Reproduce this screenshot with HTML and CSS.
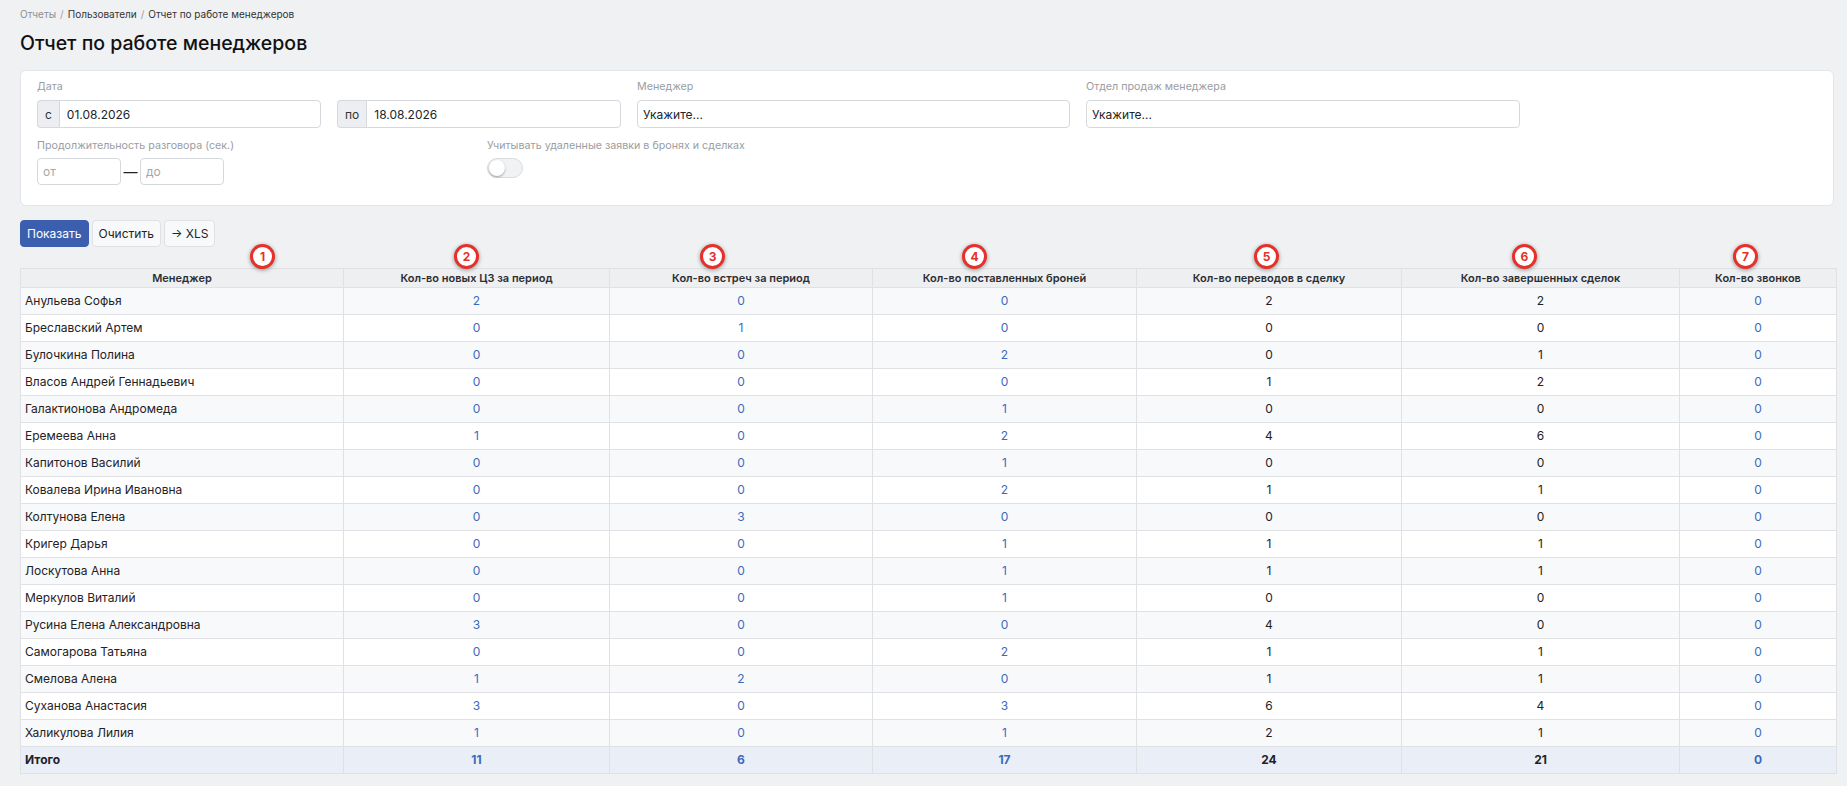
FILE: index.html
```html
<!DOCTYPE html>
<html lang="ru">
<head>
<meta charset="UTF-8">
<title>Отчет по работе менеджеров</title>
<link rel="stylesheet" href="styles.css">
</head>
<body>
<div class="page">
  <div class="breadcrumb">
    <a href="#">Отчеты</a><span class="sep">/</span><a href="#" class="dark">Пользователи</a><span class="sep">/</span><span class="dark">Отчет по работе менеджеров</span>
  </div>
  <h1>Отчет по работе менеджеров</h1>

  <div class="card filters">
    <div class="row row-top">
      <div class="field">
        <label>Дата</label>
        <div class="input-group">
          <span class="addon">с</span>
          <input type="text" value="01.08.2026">
        </div>
      </div>
      <div class="field">
        <label>&nbsp;</label>
        <div class="input-group">
          <span class="addon">по</span>
          <input type="text" value="18.08.2026">
        </div>
      </div>
      <div class="field">
        <label>Менеджер</label>
        <input type="text" class="control" value="Укажите...">
      </div>
      <div class="field">
        <label>Отдел продаж менеджера</label>
        <input type="text" class="control" value="Укажите...">
      </div>
    </div>
    <div class="row row-bottom">
      <div class="field">
        <label>Продолжительность разговора (сек.)</label>
        <div class="range">
          <input type="text" class="control small" placeholder="от">
          <span class="dash">—</span>
          <input type="text" class="control small" placeholder="до">
        </div>
      </div>
      <div class="field">
        <label>Учитывать удаленные заявки в бронях и сделках</label>
        <div class="switch"><span class="knob"></span></div>
      </div>
    </div>
  </div>

  <div class="actions">
    <button class="btn btn-primary">Показать</button>
    <button class="btn">Очистить</button>
    <button class="btn">→ XLS</button>
  </div>

  <div class="report">
    <span class="badge b1">1</span>
    <span class="badge b2">2</span>
    <span class="badge b3">3</span>
    <span class="badge b4">4</span>
    <span class="badge b5">5</span>
    <span class="badge b6">6</span>
    <span class="badge b7">7</span>
    <table class="report-table">
      <thead>
        <tr>
          <th>Менеджер</th>
          <th>Кол-во новых ЦЗ за период</th>
          <th>Кол-во встреч за период</th>
          <th>Кол-во поставленных броней</th>
          <th>Кол-во переводов в сделку</th>
          <th>Кол-во завершенных сделок</th>
          <th>Кол-во звонков</th>
        </tr>
      </thead>
      <tbody>
        <tr><td>Анульева Софья</td><td><a href="#">2</a></td><td><a href="#">0</a></td><td><a href="#">0</a></td><td>2</td><td>2</td><td><a href="#">0</a></td></tr>
        <tr><td>Бреславский Артем</td><td><a href="#">0</a></td><td><a href="#">1</a></td><td><a href="#">0</a></td><td>0</td><td>0</td><td><a href="#">0</a></td></tr>
        <tr><td>Булочкина Полина</td><td><a href="#">0</a></td><td><a href="#">0</a></td><td><a href="#">2</a></td><td>0</td><td>1</td><td><a href="#">0</a></td></tr>
        <tr><td>Власов Андрей Геннадьевич</td><td><a href="#">0</a></td><td><a href="#">0</a></td><td><a href="#">0</a></td><td>1</td><td>2</td><td><a href="#">0</a></td></tr>
        <tr><td>Галактионова Андромеда</td><td><a href="#">0</a></td><td><a href="#">0</a></td><td><a href="#">1</a></td><td>0</td><td>0</td><td><a href="#">0</a></td></tr>
        <tr><td>Еремеева Анна</td><td><a href="#">1</a></td><td><a href="#">0</a></td><td><a href="#">2</a></td><td>4</td><td>6</td><td><a href="#">0</a></td></tr>
        <tr><td>Капитонов Василий</td><td><a href="#">0</a></td><td><a href="#">0</a></td><td><a href="#">1</a></td><td>0</td><td>0</td><td><a href="#">0</a></td></tr>
        <tr><td>Ковалева Ирина Ивановна</td><td><a href="#">0</a></td><td><a href="#">0</a></td><td><a href="#">2</a></td><td>1</td><td>1</td><td><a href="#">0</a></td></tr>
        <tr><td>Колтунова Елена</td><td><a href="#">0</a></td><td><a href="#">3</a></td><td><a href="#">0</a></td><td>0</td><td>0</td><td><a href="#">0</a></td></tr>
        <tr><td>Кригер Дарья</td><td><a href="#">0</a></td><td><a href="#">0</a></td><td><a href="#">1</a></td><td>1</td><td>1</td><td><a href="#">0</a></td></tr>
        <tr><td>Лоскутова Анна</td><td><a href="#">0</a></td><td><a href="#">0</a></td><td><a href="#">1</a></td><td>1</td><td>1</td><td><a href="#">0</a></td></tr>
        <tr><td>Меркулов Виталий</td><td><a href="#">0</a></td><td><a href="#">0</a></td><td><a href="#">1</a></td><td>0</td><td>0</td><td><a href="#">0</a></td></tr>
        <tr><td>Русина Елена Александровна</td><td><a href="#">3</a></td><td><a href="#">0</a></td><td><a href="#">0</a></td><td>4</td><td>0</td><td><a href="#">0</a></td></tr>
        <tr><td>Самогарова Татьяна</td><td><a href="#">0</a></td><td><a href="#">0</a></td><td><a href="#">2</a></td><td>1</td><td>1</td><td><a href="#">0</a></td></tr>
        <tr><td>Смелова Алена</td><td><a href="#">1</a></td><td><a href="#">2</a></td><td><a href="#">0</a></td><td>1</td><td>1</td><td><a href="#">0</a></td></tr>
        <tr><td>Суханова Анастасия</td><td><a href="#">3</a></td><td><a href="#">0</a></td><td><a href="#">3</a></td><td>6</td><td>4</td><td><a href="#">0</a></td></tr>
        <tr><td>Халикулова Лилия</td><td><a href="#">1</a></td><td><a href="#">0</a></td><td><a href="#">1</a></td><td>2</td><td>1</td><td><a href="#">0</a></td></tr>
      </tbody>
      <tfoot>
        <tr><td>Итого</td><td><a href="#">11</a></td><td><a href="#">6</a></td><td><a href="#">17</a></td><td>24</td><td>21</td><td><a href="#">0</a></td></tr>
      </tfoot>
    </table>
  </div>
</div>
</body>
</html>
```

FILE: styles.css
```css
body {
  margin: 0;
  background-color: #f0f1f3;
  font-family: Inter, "Noto Sans", Arial, sans-serif;
  font-size: 12px;
  color: #212529;
}

.page {
  padding: 6px 11px 12px 20px;
}

a {
  color: #3b69bd;
  text-decoration: none;
}

.breadcrumb {
  font-size: 10px;
  line-height: 16px;
  color: #8a8d91;
}

.breadcrumb a {
  color: #8a8d91;
}

.breadcrumb .dark {
  color: #333;
}

.breadcrumb .sep {
  margin: 0 4px;
  color: #9a9da1;
}

h1 {
  margin: 9px 0 15px;
  font-size: 19.5px;
  line-height: 24px;
  font-weight: 500;
  color: #111;
}

.card {
  background-color: #fff;
  border: 1px solid #e3e5e8;
  border-radius: 6px;
  margin-right: 2px;
}

.filters {
  padding: 9px 16px 20px;
}

.row {
  display: grid;
  column-gap: 16px;
}

.row-top {
  grid-template-columns: 284px 284px 433px 434px;
}

.row-bottom {
  grid-template-columns: 434px auto;
  margin-top: 11px;
}

.field label {
  display: block;
  font-size: 10.7px;
  line-height: 14px;
  color: #9a9da2;
  margin-bottom: 6px;
}

.row-bottom .field label {
  margin-bottom: 5px;
}

.input-group {
  display: flex;
  height: 28px;
}

.input-group .addon {
  display: flex;
  align-items: center;
  padding: 0 7px;
  background-color: #eceef1;
  border: 1px solid #d5d8dc;
  border-right: none;
  border-radius: 4px 0 0 4px;
  color: #333;
}

.input-group input {
  flex: 1;
  min-width: 0;
  border-radius: 0 4px 4px 0;
}

input {
  box-sizing: border-box;
  height: 28px;
  border: 1px solid #d5d8dc;
  border-radius: 4px;
  padding: 0 7px;
  font-family: inherit;
  font-size: 12px;
  color: #212529;
  background-color: #fff;
  outline: none;
}

input::placeholder {
  color: #a4a7ab;
}

.control {
  width: 100%;
  padding: 0 5px;
}

.range {
  display: flex;
  align-items: center;
}

.control.small {
  width: 84px;
  height: 27px;
}

.dash {
  width: 19px;
  text-align: center;
  font-size: 14px;
  color: #222;
}

.switch {
  position: relative;
  width: 36px;
  height: 20px;
  margin-top: 4px;
  box-sizing: border-box;
  border: 1px solid #d8dadd;
  border-radius: 10px;
  background-color: #f1f2f4;
}

.switch .knob {
  position: absolute;
  top: 1px;
  left: 1px;
  width: 16px;
  height: 16px;
  border-radius: 50%;
  background-color: #fff;
  box-shadow: 0 1px 2px rgba(0, 0, 0, 0.35);
}

.actions {
  display: flex;
  gap: 3px;
  margin-top: 14px;
}

.btn {
  height: 27px;
  padding: 0 6px;
  border: 1px solid #dfe1e4;
  border-radius: 4px;
  background-color: #f8f9fa;
  font-family: inherit;
  font-size: 12px;
  color: #212529;
  cursor: pointer;
}

.btn-primary {
  background-color: #3b5fae;
  border-color: #3b5fae;
  color: #fff;
}

.report {
  position: relative;
  margin-top: 21px;
}

.badge {
  position: absolute;
  top: -24px;
  box-sizing: border-box;
  width: 25px;
  height: 25px;
  border: 3px solid #e8302a;
  border-radius: 50%;
  background-color: #fff;
  color: #e8302a;
  font-size: 12px;
  font-weight: 700;
  line-height: 19px;
  text-align: center;
  box-shadow: 0 1px 4px rgba(0, 0, 0, 0.4);
}

.b1 { left: 230px; }
.b2 { left: 434px; }
.b3 { left: 680px; }
.b4 { left: 942px; }
.b5 { left: 1234px; }
.b6 { left: 1492px; }
.b7 { left: 1713px; }

.report-table {
  width: 1816px;
  table-layout: fixed;
  border-collapse: collapse;
  background-color: #fff;
}

.report-table th,
.report-table td {
  box-sizing: border-box;
  border: 1px solid #dfe1e4;
}

.report-table th {
  padding: 3px 4px;
  line-height: 12px;
  font-size: 11px;
  font-weight: 600;
  color: #2b2e33;
  background-color: #eeeff1;
  text-align: center;
}

.report-table th:nth-child(1) { width: 323px; }
.report-table th:nth-child(2) { width: 266px; }
.report-table th:nth-child(3) { width: 263px; }
.report-table th:nth-child(4) { width: 264px; }
.report-table th:nth-child(5) { width: 265px; }
.report-table th:nth-child(6) { width: 278px; }
.report-table th:nth-child(7) { width: 157px; }

.report-table td {
  padding: 6px 4px;
  line-height: 14px;
  text-align: center;
  color: #1f2226;
}

.report-table td:first-child {
  text-align: left;
}

.report-table tbody tr:nth-child(odd) td {
  background-color: #f8f9fa;
}

.report-table tfoot td {
  background-color: #eaeff7;
  font-weight: 700;
}
```
